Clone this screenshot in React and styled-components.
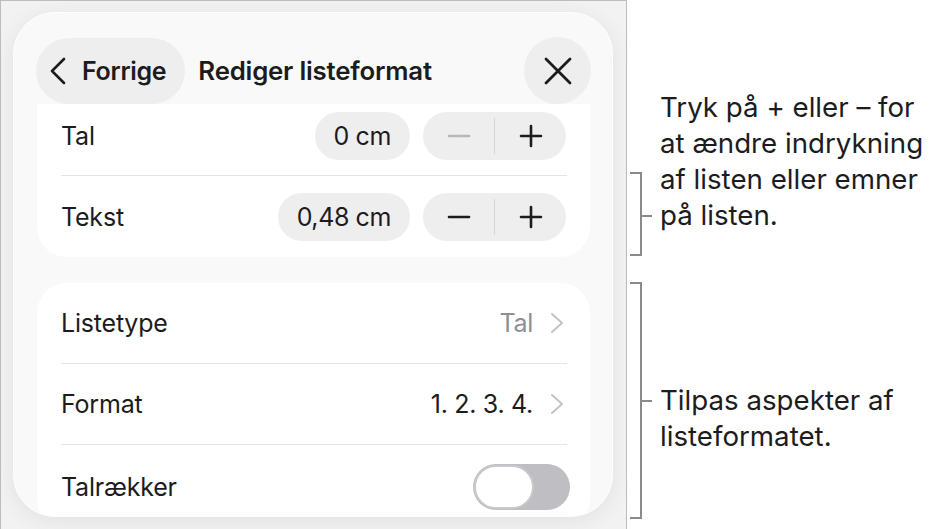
import React from 'react'
import styled, { createGlobalStyle } from 'styled-components'

const GlobalStyle = createGlobalStyle`
  * {
    box-sizing: border-box;
  }
  body {
    margin: 0;
    background: #ffffff;
    font-family: 'Inter', 'Noto Sans', sans-serif;
    color: #1c1c1e;
  }
`

const ChevronLeft = () => (
  <svg width="18" height="28" viewBox="0 0 18 28" fill="none">
    <path d="M15 2 L3 14 L15 26" stroke="#1c1c1e" strokeWidth="2.6" strokeLinecap="round" strokeLinejoin="round" />
  </svg>
)

const CloseIcon = () => (
  <svg width="28" height="28" viewBox="0 0 28 28" fill="none">
    <path d="M2 2 L26 26 M26 2 L2 26" stroke="#1c1c1e" strokeWidth="2.8" strokeLinecap="round" />
  </svg>
)

const MinusIcon = ({ disabled }) => (
  <svg width="26" height="26" viewBox="0 0 26 26" fill="none">
    <path d="M3 13 H23" stroke={disabled ? '#b8b8bb' : '#1c1c1e'} strokeWidth="2.6" strokeLinecap="round" />
  </svg>
)

const PlusIcon = () => (
  <svg width="26" height="26" viewBox="0 0 26 26" fill="none">
    <path d="M3 13 H23 M13 3 V23" stroke="#1c1c1e" strokeWidth="2.6" strokeLinecap="round" />
  </svg>
)

const ChevronRight = () => (
  <svg width="14" height="22" viewBox="0 0 14 22" fill="none">
    <path d="M2 2 L12 11 L2 20" stroke="#c4c4c7" strokeWidth="2" strokeLinecap="round" strokeLinejoin="round" />
  </svg>
)

const Bracket = ({ height, tick }) => (
  <svg width="33" height={height} viewBox={`0 0 33 ${height}`} fill="none">
    <path
      d={`M3 1 H14 V${height - 1} H3 M14 ${tick} H25`}
      stroke="#8a8a8a"
      strokeWidth="2"
    />
  </svg>
)

const Page = styled.div`
  display: flex;
  width: 942px;
  height: 529px;
  overflow: hidden;
`

const DeviceFrame = styled.div`
  width: 627px;
  height: 560px;
  flex-shrink: 0;
  border: 1px solid #bdbdbd;
  border-bottom: none;
  background: #f2f2f2;
  padding: 11px 0 0 12px;
`

const Panel = styled.div`
  width: 600px;
  height: 505px;
  border-radius: 42px;
  background: #f9f9f9;
  border: 1px solid #ffffff;
  box-shadow: 0 4px 22px rgba(0, 0, 0, 0.07);
  overflow: hidden;
  display: flex;
  flex-direction: column;
`

const Header = styled.div`
  display: flex;
  align-items: center;
  padding: 24px 21px 0 22px;
`

const BackButton = styled.div`
  display: flex;
  align-items: center;
  gap: 15px;
  height: 66px;
  padding: 0 19px 0 13px;
  border-radius: 33px;
  background: #eeeeee;
  font-size: 25px;
  font-weight: 600;
  letter-spacing: -0.3px;
`

const Title = styled.div`
  flex: 1;
  margin-left: 13px;
  font-size: 25.8px;
  font-weight: 600;
  letter-spacing: -0.2px;
`

const CloseButton = styled.div`
  width: 67px;
  height: 67px;
  border-radius: 50%;
  background: #eeeeee;
  display: flex;
  align-items: center;
  justify-content: center;
`

const Content = styled.div`
  display: flex;
  flex-direction: column;
  gap: 26px;
  padding: 0 22px 0 23px;
`

const Card = styled.div`
  background: #ffffff;
  border-radius: ${(p) => (p.$clipped ? '0 0 30px 30px' : '30px')};
`

const Row = styled.div`
  display: flex;
  align-items: center;
  height: ${(p) => p.$height}px;
  padding: 0 ${(p) => p.$right || 24}px ${(p) => p.$lift || 0}px 24px;
`

const Label = styled.div`
  flex: 1;
  font-size: 25px;
  letter-spacing: -0.2px;
`

const Divider = styled.div`
  height: 1px;
  margin: 0 23px 0 24px;
  background: #e4e4e6;
`

const ValuePill = styled.div`
  height: 48px;
  display: flex;
  align-items: center;
  padding: 0 19px;
  border-radius: 24px;
  background: #eeeeef;
  font-size: 25px;
  letter-spacing: -0.4px;
  margin-right: 13px;
`

const Stepper = styled.div`
  display: flex;
  align-items: center;
  width: 143px;
  height: 48px;
  border-radius: 24px;
  background: #eeeeef;
`

const StepButton = styled.div`
  flex: 1;
  height: 100%;
  display: flex;
  align-items: center;
  justify-content: center;
`

const StepDivider = styled.div`
  width: 1px;
  height: 36px;
  background: #d6d6d8;
`

const Value = styled.div`
  font-size: 25px;
  letter-spacing: -0.3px;
  color: ${(p) => (p.$muted ? '#8e8e93' : '#1c1c1e')};
  margin-right: 17px;
`

const Toggle = styled.div`
  width: 97px;
  height: 46px;
  border-radius: 23px;
  background: #bebec3;
  padding: 1px;
  display: flex;
`

const Knob = styled.div`
  width: 60px;
  height: 44px;
  border-radius: 22px;
  background: #ffffff;
  border: 2px solid #cacacc;
`

const Annotations = styled.div`
  flex: 1;
  display: flex;
  flex-direction: column;
  padding-top: 89px;
`

const Callout = styled.div`
  display: grid;
  grid-template-columns: 33px 1fr;
  height: ${(p) => p.$height}px;
  margin-top: ${(p) => p.$gap || 0}px;
`

const BracketSlot = styled.div`
  align-self: ${(p) => p.$align};
  display: flex;
`

const CalloutText = styled.div`
  font-size: 27.7px;
  line-height: 36px;
  color: #1c1c1e;
  white-space: nowrap;
  margin-top: ${(p) => p.$offset || 0}px;
`

const StepperRow = ({ label, value, height, lift, minusDisabled }) => (
  <Row $height={height} $lift={lift}>
    <Label>{label}</Label>
    <ValuePill>{value}</ValuePill>
    <Stepper>
      <StepButton>
        <MinusIcon disabled={minusDisabled} />
      </StepButton>
      <StepDivider />
      <StepButton>
        <PlusIcon />
      </StepButton>
    </Stepper>
  </Row>
)

const NavRow = ({ label, value, muted }) => (
  <Row $height={80} $right={26}>
    <Label>{label}</Label>
    <Value $muted={muted}>{value}</Value>
    <ChevronRight />
  </Row>
)

const App = () => {
  return (
    <>
      <GlobalStyle />
      <Page>
        <DeviceFrame>
          <Panel>
            <Header>
              <BackButton>
                <ChevronLeft />
                Forrige
              </BackButton>
              <Title>Rediger listeformat</Title>
              <CloseButton>
                <CloseIcon />
              </CloseButton>
            </Header>
            <Content>
              {/* scrolled: the top of this card sits under the header */}
              <Card $clipped>
                <StepperRow label="Tal" value="0 cm" height={71} lift={7} minusDisabled />
                <Divider />
                <StepperRow label="Tekst" value="0,48 cm" height={81} />
              </Card>
              <Card>
                <NavRow label="Listetype" value="Tal" muted />
                <Divider />
                <NavRow label="Format" value="1. 2. 3. 4." />
                <Divider />
                <Row $height={84} $right={20}>
                  <Label>Talrækker</Label>
                  <Toggle>
                    <Knob />
                  </Toggle>
                </Row>
              </Card>
            </Content>
          </Panel>
        </DeviceFrame>
        <Annotations>
          <Callout $height={167}>
            <BracketSlot $align="end">
              <Bracket height={84} tick={44} />
            </BracketSlot>
            <CalloutText>
              Tryk på + eller – for
              <br />
              at ændre indrykning
              <br />
              af listen eller emner
              <br />
              på listen.
            </CalloutText>
          </Callout>
          <Callout $height={237} $gap={26}>
            <BracketSlot $align="start">
              <Bracket height={237} tick={119} />
            </BracketSlot>
            <CalloutText $offset={100}>
              Tilpas aspekter af
              <br />
              listeformatet.
            </CalloutText>
          </Callout>
        </Annotations>
      </Page>
    </>
  )
}

export default App
